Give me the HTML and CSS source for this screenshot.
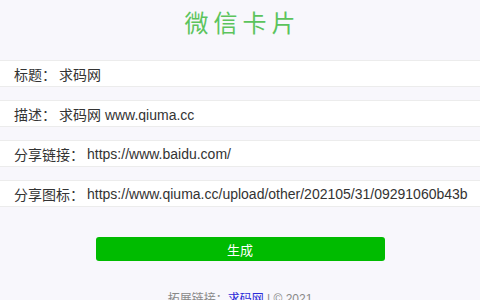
FILE: index.html
```
<!DOCTYPE html>
<html lang="zh-CN">
  <head>
    <meta charset="UTF-8" />
    <meta name="viewport" content="width=device-width, initial-scale=1.0" />
    <title>微信卡片</title>
    <link rel="stylesheet" href="styles.css">
  </head>
  <body>
    <h1 class="title">微信卡片</h1>
    <form class="card-form">
      <div class="field">
        <label for="title">标题：</label>
        <input id="title" type="text" value="求码网" />
      </div>
      <div class="field">
        <label for="desc">描述：</label>
        <input id="desc" type="text" value="求码网 www.qiuma.cc" />
      </div>
      <div class="field">
        <label for="link">分享链接：</label>
        <input id="link" type="text" value="https://www.baidu.com/" />
      </div>
      <div class="field">
        <label for="icon">分享图标：</label>
        <input id="icon" type="text" value="https://www.qiuma.cc/upload/other/202105/31/09291060b43b" />
      </div>
      <div class="actions">
        <button type="button" class="submit-btn">生成</button>
      </div>
    </form>
    <footer class="footer">
      拓展链接：<a href="#">求码网</a> | © 2021
    </footer>
  </body>
</html>
```

FILE: styles.css
```
* {
  margin: 0;
  padding: 0;
  box-sizing: border-box;
}
body {
  font-family: "Liberation Sans", Arial, "Noto Sans CJK SC", sans-serif;
  background: #f8f7fc;
  color: #333;
  width: 480px;
  height: 300px;
  overflow: hidden;
}
.title {
  text-align: center;
  font-size: 24px;
  font-weight: normal;
  line-height: 48px;
  letter-spacing: 5px;
  padding-left: 5px;
  color: #5cc45c;
}
.card-form {
  margin-top: 12px;
}
.field {
  display: flex;
  align-items: center;
  height: 27px;
  margin-bottom: 13px;
  background: #fff;
  border-top: 1px solid #ececec;
  border-bottom: 1px solid #ececec;
  padding-left: 14px;
  font-size: 14px;
}
.field label {
  flex: none;
  color: #333;
}
.field input {
  flex: 1;
  min-width: 0;
  border: none;
  outline: none;
  background: transparent;
  font-family: inherit;
  font-size: 14px;
  color: #333;
  padding: 0 8px 0 3px;
}
.actions {
  display: flex;
  justify-content: center;
  padding-top: 17px;
}
.submit-btn {
  width: 289px;
  height: 24px;
  border: none;
  border-radius: 3px;
  background: #00bb00;
  color: #fff;
  font-family: inherit;
  font-size: 13px;
  cursor: pointer;
}
.footer {
  margin-top: 28px;
  text-align: center;
  font-size: 12px;
  color: #888;
}
.footer a {
  color: #2b2bd8;
  text-decoration: none;
}
```
